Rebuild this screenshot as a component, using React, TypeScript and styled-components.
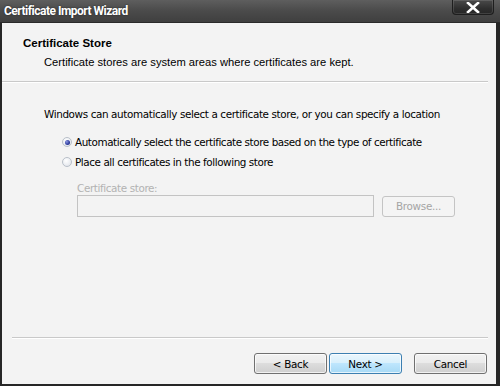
import styled, { createGlobalStyle } from "styled-components";

const GlobalStyle = createGlobalStyle`
  html, body {
    margin: 0;
    padding: 0;
    background: #2b2b2b;
  }
  * {
    box-sizing: border-box;
  }
`;

const Window = styled.div`
  width: 500px;
  height: 386px;
  display: flex;
  flex-direction: column;
  background: #262626;
  padding: 0 4px 2px 2px;
  font-family: "DejaVu Sans", "Liberation Sans", sans-serif;
`;

const TitleBar = styled.div`
  height: 23px;
  margin: 0 -4px 0 -2px;
  padding: 0 6px 0 4px;
  display: flex;
  align-items: flex-start;
  justify-content: space-between;
  background: linear-gradient(180deg, #5e5e5e 0%, #4c4c4c 45%, #3f3f3f 100%);
  border-bottom: 1px solid #2a2a2a;
`;

const Title = styled.div`
  color: #ffffff;
  font-family: "Roboto", "Liberation Sans", Arial, sans-serif;
  font-weight: bold;
  font-size: 12px;
  letter-spacing: -0.5px;
  line-height: 22px;
  text-shadow: 0 0 2px rgba(0, 0, 0, 0.6);
`;

const CloseButton = styled.div`
  width: 42px;
  height: 15px;
  border: 1px solid #1e1e1e;
  border-top: none;
  border-radius: 0 0 4px 4px;
  background: linear-gradient(180deg, #4a4a4a 0%, #2f2f2f 60%, #262626 100%);
  box-shadow: inset 0 0 0 1px rgba(255, 255, 255, 0.12);
  display: flex;
  align-items: center;
  justify-content: center;
`;

const Client = styled.div`
  flex: 1;
  display: flex;
  flex-direction: column;
  background: #f3f3f3;
`;

const Header = styled.div`
  height: 58px;
  padding: 13px 0 0 21px;
`;

const HeaderTitle = styled.div`
  font-family: "Liberation Sans", Arial, sans-serif;
  font-weight: bold;
  font-size: 11.5px;
  color: #000;
  line-height: 14px;
`;

const HeaderSub = styled.div`
  font-family: "Liberation Sans", Arial, sans-serif;
  font-size: 11.2px;
  color: #000;
  line-height: 14px;
  margin: 5px 0 0 21px;
`;

const Divider = styled.div<{ $inset: number }>`
  height: 2px;
  margin: 0 8px 0 ${({ $inset }) => $inset}px;
  border-top: 1px solid #c9c9c9;
  border-bottom: 1px solid #ffffff;
`;

const Body = styled.div`
  flex: 1;
  padding: 24px 0 0 42px;
  font-family: "DejaVu Sans", sans-serif;
  font-size: 10.4px;
  letter-spacing: -0.38px;
  color: #000;
`;

const Lead = styled.div`
  line-height: 14px;
`;

const Options = styled.div`
  display: flex;
  flex-direction: column;
  gap: 6px;
  margin: 14px 0 0 18px;
`;

const Option = styled.label`
  display: flex;
  align-items: center;
  gap: 3px;
  line-height: 14px;
  letter-spacing: -0.42px;
`;

const Radio = styled.span<{ $checked?: boolean }>`
  width: 10px;
  height: 10px;
  border-radius: 50%;
  border: 1px solid #b9c0c9;
  background: radial-gradient(circle at 40% 35%, #ffffff 0%, #e6e9ee 70%, #d6dbe2 100%);
  display: flex;
  align-items: center;
  justify-content: center;
  &::after {
    content: "";
    display: ${({ $checked }) => ($checked ? "block" : "none")};
    width: 5px;
    height: 5px;
    border-radius: 50%;
    background: radial-gradient(circle at 35% 35%, #8a95e0 0%, #2d3b9c 60%, #1e2a7c 100%);
  }
`;

const StoreBlock = styled.div`
  margin: 13px 0 0 33px;
`;

const FieldLabel = styled.div`
  color: #b2b2b2;
  line-height: 13px;
`;

const FieldRow = styled.div`
  display: flex;
  align-items: center;
  gap: 8px;
`;

const Field = styled.div`
  width: 297px;
  height: 22px;
  border: 1px solid #c3c3c3;
  background: #f3f3f3;
`;

const Button = styled.div<{ $primary?: boolean; $disabled?: boolean }>`
  width: 73px;
  height: 21px;
  display: flex;
  align-items: center;
  justify-content: center;
  border-radius: 3px;
  font-family: "DejaVu Sans", sans-serif;
  font-size: 10.4px;
  letter-spacing: -0.3px;
  color: ${({ $disabled }) => ($disabled ? "#a5a5a5" : "#000")};
  border: 1px solid
    ${({ $primary, $disabled }) =>
      $disabled ? "#c4c4c4" : $primary ? "#3c7fb1" : "#707070"};
  background: ${({ $primary, $disabled }) =>
    $disabled
      ? "#f4f4f4"
      : $primary
        ? "linear-gradient(180deg, #eaf6fd 0%, #d9f0fc 45%, #bee6fd 50%, #a7d9f5 100%)"
        : "linear-gradient(180deg, #f2f2f2 0%, #ebebeb 45%, #dddddd 50%, #cfcfcf 100%)"};
  box-shadow: ${({ $disabled }) =>
    $disabled ? "none" : "inset 0 0 0 1px rgba(255, 255, 255, 0.7)"};
`;

const Footer = styled.div`
  height: 45px;
  display: flex;
  justify-content: flex-end;
  align-items: flex-start;
  padding: 14px 9px 0 0;
`;

const NavGroup = styled.div`
  display: flex;
  gap: 2px;
  margin-right: 12px;
`;

export default function App() {
  return (
    <>
      <GlobalStyle />
      <Window>
        <TitleBar>
          <Title>Certificate Import Wizard</Title>
          <CloseButton>
            <svg width="14" height="11" viewBox="0 0 14 11">
              <path
                d="M2 1 L12 10 M12 1 L2 10"
                stroke="#ffffff"
                strokeWidth="2.6"
                strokeLinecap="square"
              />
            </svg>
          </CloseButton>
        </TitleBar>
        <Client>
          <Header>
            <HeaderTitle>Certificate Store</HeaderTitle>
            <HeaderSub>
              Certificate stores are system areas where certificates are kept.
            </HeaderSub>
          </Header>
          <Divider $inset={0} />
          <Body>
            <Lead>
              Windows can automatically select a certificate store, or you can
              specify a location
            </Lead>
            <Options>
              <Option>
                <Radio $checked />
                Automatically select the certificate store based on the type of
                certificate
              </Option>
              <Option>
                <Radio />
                Place all certificates in the following store
              </Option>
            </Options>
            <StoreBlock>
              <FieldLabel>Certificate store:</FieldLabel>
              <FieldRow>
                <Field />
                <Button $disabled>Browse...</Button>
              </FieldRow>
            </StoreBlock>
          </Body>
          <Divider $inset={10} />
          <Footer>
            <NavGroup>
              <Button>&lt; Back</Button>
              <Button $primary>Next &gt;</Button>
            </NavGroup>
            <Button>Cancel</Button>
          </Footer>
        </Client>
      </Window>
    </>
  );
}
